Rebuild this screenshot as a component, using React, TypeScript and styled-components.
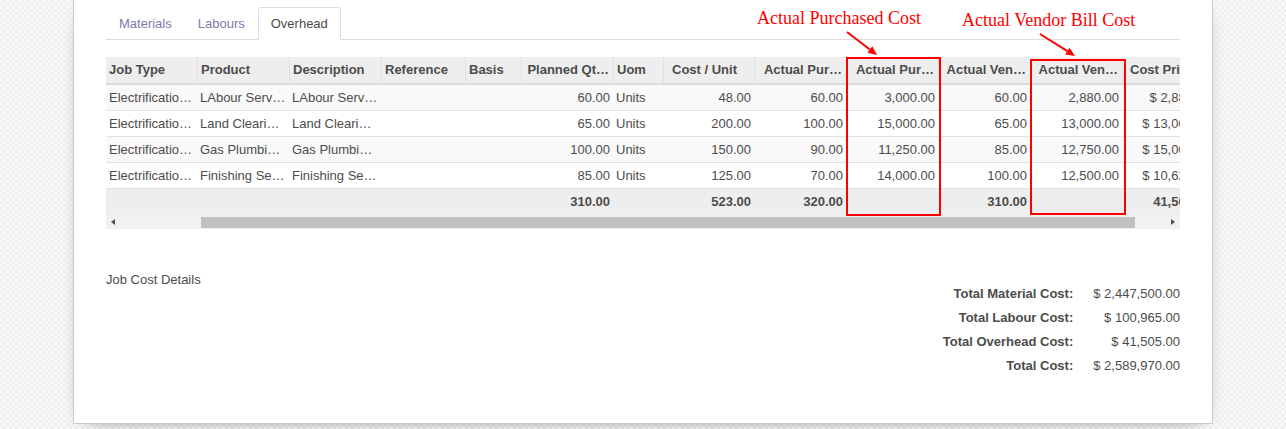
import React from 'react';
import styled, { createGlobalStyle } from 'styled-components';

type Align = 'left' | 'right';

interface Column {
  key: string;
  label: string;
  shown?: string;
  width: number;
  align: Align;
  headAlign?: Align;
  headPadRight?: number;
  headIndent?: number;
}

const columns: Column[] = [
  { key: 'jobType', label: 'Job Type', width: 91, align: 'left' },
  { key: 'product', label: 'Product', width: 92, align: 'left' },
  { key: 'description', label: 'Description', width: 92, align: 'left' },
  { key: 'reference', label: 'Reference', width: 84, align: 'left' },
  { key: 'basis', label: 'Basis', width: 56, align: 'left' },
  { key: 'plannedQty', label: 'Planned Qty', shown: 'Planned Qt…', width: 92, align: 'right' },
  { key: 'uom', label: 'Uom', width: 50, align: 'left' },
  { key: 'costUnit', label: 'Cost / Unit', width: 91, align: 'right', headPadRight: 17 },
  { key: 'actPurQty', label: 'Actual Purchased Quantity', shown: 'Actual Pur…', width: 92, align: 'right' },
  { key: 'actPurCost', label: 'Actual Purchased Cost', shown: 'Actual Pur…', width: 92, align: 'right' },
  { key: 'actVenQty', label: 'Actual Vendor Bill Quantity', shown: 'Actual Ven…', width: 92, align: 'right' },
  { key: 'actVenCost', label: 'Actual Vendor Bill Cost', shown: 'Actual Ven…', width: 92, align: 'right' },
  { key: 'costPrice', label: 'Cost Price', width: 92, align: 'right', headAlign: 'left', headIndent: 4 },
];

type RowData = Record<string, string>;

const rows: RowData[] = [
  {
    jobType: 'Electrification Work', product: 'LAbour Service', description: 'LAbour Service',
    reference: '', basis: '', plannedQty: '60.00', uom: 'Units', costUnit: '48.00',
    actPurQty: '60.00', actPurCost: '3,000.00', actVenQty: '60.00', actVenCost: '2,880.00',
    costPrice: '$ 2,880.00',
  },
  {
    jobType: 'Electrification Work', product: 'Land Clearing Service', description: 'Land Clearing Service',
    reference: '', basis: '', plannedQty: '65.00', uom: 'Units', costUnit: '200.00',
    actPurQty: '100.00', actPurCost: '15,000.00', actVenQty: '65.00', actVenCost: '13,000.00',
    costPrice: '$ 13,000.00',
  },
  {
    jobType: 'Electrification Work', product: 'Gas Plumbing Service', description: 'Gas Plumbing Service',
    reference: '', basis: '', plannedQty: '100.00', uom: 'Units', costUnit: '150.00',
    actPurQty: '90.00', actPurCost: '11,250.00', actVenQty: '85.00', actVenCost: '12,750.00',
    costPrice: '$ 15,000.00',
  },
  {
    jobType: 'Electrification Work', product: 'Finishing Service', description: 'Finishing Service',
    reference: '', basis: '', plannedQty: '85.00', uom: 'Units', costUnit: '125.00',
    actPurQty: '70.00', actPurCost: '14,000.00', actVenQty: '100.00', actVenCost: '12,500.00',
    costPrice: '$ 10,625.00',
  },
];

const footer: RowData = {
  plannedQty: '310.00',
  costUnit: '523.00',
  actPurQty: '320.00',
  actVenQty: '310.00',
  costPrice: '41,505.00',
};

const totals = [
  { label: 'Total Material Cost:', value: '$ 2,447,500.00' },
  { label: 'Total Labour Cost:', value: '$ 100,965.00' },
  { label: 'Total Overhead Cost:', value: '$ 41,505.00' },
  { label: 'Total Cost:', value: '$ 2,589,970.00' },
];

const GRID = columns.map((c) => `${c.width}px`).join(' ');

const GlobalStyle = createGlobalStyle`
  html, body {
    margin: 0;
    padding: 0;
  }
  body {
    font-family: "Liberation Sans", Arial, sans-serif;
    font-size: 13px;
    color: #4c4c4c;
    background-color: #f9f9f9;
    background-image: conic-gradient(#efefef 25%, transparent 0 50%, #efefef 0 75%, transparent 0);
    background-size: 6px 6px;
  }
`;

const Page = styled.div`
  position: relative;
  width: 1286px;
  height: 429px;
  overflow: hidden;
`;

const Sheet = styled.div`
  box-sizing: border-box;
  width: 1140px;
  margin: 0 auto;
  padding: 7px 32px 45px;
  background: #ffffff;
  border: 1px solid #c8c8d3;
  border-top: none;
  box-shadow: 0 5px 20px -15px #000;
`;

const TabList = styled.ul`
  display: flex;
  height: 32px;
  margin: 0;
  padding: 0;
  list-style: none;
  border-bottom: 1px solid #dddddd;
`;

const Tab = styled.li<{ $active?: boolean }>`
  box-sizing: border-box;
  display: flex;
  align-items: center;
  height: 33px;
  margin-bottom: -1px;
  padding: 0 12px;
  border: 1px solid ${(p) => (p.$active ? '#dddddd' : 'transparent')};
  border-bottom-color: ${(p) => (p.$active ? '#ffffff' : 'transparent')};
  border-radius: 3px 3px 0 0;
  background: ${(p) => (p.$active ? '#ffffff' : 'transparent')};
  color: ${(p) => (p.$active ? '#4c4c4c' : '#7c7bad')};
  cursor: pointer;
`;

const TableViewport = styled.div`
  margin-top: 17px;
  overflow: hidden;
`;

const HeadRow = styled.div`
  display: grid;
  grid-template-columns: ${GRID};
  width: max-content;
  box-sizing: border-box;
  height: 28px;
  background: #eeeeee;
  border-bottom: 2px solid #dcdcdc;
  font-weight: bold;
`;

const BodyRow = styled.div<{ $striped?: boolean }>`
  display: grid;
  grid-template-columns: ${GRID};
  width: max-content;
  box-sizing: border-box;
  height: 26px;
  background: ${(p) => (p.$striped ? '#f9f9f9' : '#ffffff')};
  border-bottom: 1px solid #e1e1e6;
`;

const FootRow = styled.div`
  display: grid;
  grid-template-columns: ${GRID};
  width: max-content;
  height: 26px;
  background: #eeeeee;
  font-weight: bold;
`;

const HeadCell = styled.div<{ $align: Align; $first?: boolean; $indent?: number; $padRight?: number }>`
  box-sizing: border-box;
  padding: 0 ${(p) => p.$padRight ?? 4}px 0 ${(p) => 3 + (p.$indent ?? 0)}px;
  border-left: ${(p) => (p.$first ? 'none' : '1px solid #e0e0e0')};
  line-height: 26px;
  text-align: ${(p) => p.$align};
  white-space: nowrap;
  overflow: hidden;
`;

const Cell = styled.div<{ $align: Align }>`
  box-sizing: border-box;
  padding: 0 3px;
  line-height: 25px;
  text-align: ${(p) => p.$align};
  white-space: nowrap;
  overflow: hidden;
  text-overflow: ellipsis;
`;

const ScrollBar = styled.div`
  display: flex;
  height: 14px;
  background: #f1f1f1;
`;

const ScrollButton = styled.div<{ $dir: 'left' | 'right' }>`
  position: relative;
  width: 15px;
  flex: none;

  &::before {
    content: '';
    position: absolute;
    top: 4px;
    left: ${(p) => (p.$dir === 'left' ? '5px' : '6px')};
    border-top: 3.5px solid transparent;
    border-bottom: 3.5px solid transparent;
    ${(p) =>
      p.$dir === 'left' ? 'border-right: 4px solid #505050;' : 'border-left: 4px solid #505050;'}
  }
`;

const ScrollTrack = styled.div`
  flex: 1;
  display: flex;
`;

const ScrollThumb = styled.div<{ $start: number; $length: number }>`
  margin: 2px 0 1px ${(p) => p.$start}px;
  width: ${(p) => p.$length}px;
  background: #c1c1c1;
`;

const Summary = styled.div`
  display: flex;
  justify-content: space-between;
  align-items: flex-start;
  margin-top: 42px;
`;

const SummaryTitle = styled.div`
  line-height: 18px;
`;

const Totals = styled.div`
  display: grid;
  grid-template-columns: auto auto;
  column-gap: 20px;
  margin-top: 11px;
`;

const TotalLabel = styled.div`
  font-weight: bold;
  text-align: right;
  line-height: 24px;
`;

const TotalValue = styled.div`
  text-align: right;
  line-height: 24px;
`;

const Callout = styled.div<{ $left: number; $top: number }>`
  position: absolute;
  left: ${(p) => p.$left}px;
  top: ${(p) => p.$top}px;
  font-family: "Liberation Serif", "Times New Roman", serif;
  font-size: 18px;
  line-height: 1;
  color: #ff0000;
  white-space: nowrap;
`;

const HighlightBox = styled.div<{ $left: number; $top: number; $w: number; $h: number }>`
  position: absolute;
  box-sizing: border-box;
  left: ${(p) => p.$left}px;
  top: ${(p) => p.$top}px;
  width: ${(p) => p.$w}px;
  height: ${(p) => p.$h}px;
  border: 2px solid #ff0000;
  pointer-events: none;
`;

const ArrowLayer = styled.svg`
  position: absolute;
  left: 0;
  top: 0;
  pointer-events: none;
`;

function Arrow({ x1, y1, x2, y2 }: { x1: number; y1: number; x2: number; y2: number }) {
  const dx = x2 - x1;
  const dy = y2 - y1;
  const len = Math.hypot(dx, dy);
  const ux = dx / len;
  const uy = dy / len;
  const head = 9;
  const half = 4;
  const bx = x2 - ux * head;
  const by = y2 - uy * head;
  const px = -uy;
  const py = ux;
  const pts = `${x2},${y2} ${bx + px * half},${by + py * half} ${bx - px * half},${by - py * half}`;
  return (
    <g>
      <line x1={x1} y1={y1} x2={bx} y2={by} stroke="#ff0000" strokeWidth={2} />
      <polygon points={pts} fill="#ff0000" />
    </g>
  );
}

const tabs = ['Materials', 'Labours', 'Overhead'];

export default function App() {
  return (
    <>
      <GlobalStyle />
      <Page>
        <Sheet>
          <TabList>
            {tabs.map((t) => (
              <Tab key={t} $active={t === 'Overhead'}>
                {t}
              </Tab>
            ))}
          </TabList>

          <TableViewport>
            <HeadRow>
              {columns.map((c, i) => (
                <HeadCell
                  key={c.key}
                  title={c.label}
                  $align={c.headAlign ?? c.align}
                  $first={i === 0}
                  $indent={c.headIndent}
                  $padRight={c.headPadRight}
                >
                  {c.shown ?? c.label}
                </HeadCell>
              ))}
            </HeadRow>
            {rows.map((r, ri) => (
              <BodyRow key={ri} $striped={ri % 2 === 0}>
                {columns.map((c) => (
                  <Cell key={c.key} $align={c.align}>
                    {r[c.key]}
                  </Cell>
                ))}
              </BodyRow>
            ))}
            <FootRow>
              {columns.map((c) => (
                <Cell key={c.key} $align={c.align}>
                  {footer[c.key] ?? ''}
                </Cell>
              ))}
            </FootRow>
          </TableViewport>
          <ScrollBar>
            <ScrollButton $dir="left" />
            <ScrollTrack>
              <ScrollThumb $start={80} $length={934} />
            </ScrollTrack>
            <ScrollButton $dir="right" />
          </ScrollBar>

          <Summary>
            <SummaryTitle>Job Cost Details</SummaryTitle>
            <Totals>
              {totals.map((t) => (
                <React.Fragment key={t.label}>
                  <TotalLabel>{t.label}</TotalLabel>
                  <TotalValue>{t.value}</TotalValue>
                </React.Fragment>
              ))}
            </Totals>
          </Summary>
        </Sheet>

        <HighlightBox $left={846} $top={57} $w={95} $h={159} />
        <HighlightBox $left={1030} $top={59} $w={96} $h={156} />
        <Callout $left={757} $top={9}>Actual Purchased Cost</Callout>
        <Callout $left={962} $top={11}>Actual Vendor Bill Cost</Callout>
        <ArrowLayer width={1286} height={429} viewBox="0 0 1286 429">
          <Arrow x1={847} y1={32} x2={877} y2={55} />
          <Arrow x1={1040} y1={34} x2={1075} y2={56} />
        </ArrowLayer>
      </Page>
    </>
  );
}
